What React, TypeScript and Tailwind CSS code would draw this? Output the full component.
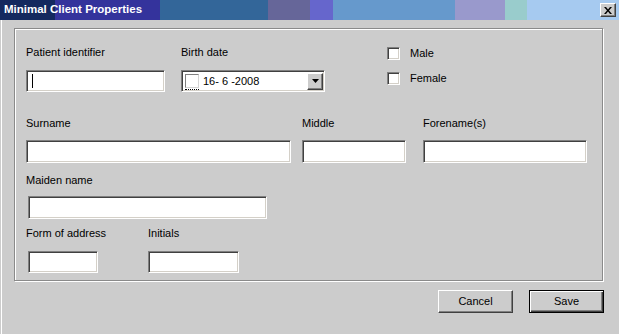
const sunken =
  "bg-white border border-t-[#808080] border-l-[#808080] border-r-white border-b-white shadow-[inset_1px_1px_0_#404040,inset_-1px_-1px_0_#d4d0c8]"

const raised =
  "bg-[#cccccc] border border-t-white border-l-white border-r-[#404040] border-b-[#404040] shadow-[inset_-1px_-1px_0_#808080]"

function Label({ children, className = "" }: { children: React.ReactNode; className?: string }) {
  return <div className={`h-[13px] leading-[13px] whitespace-nowrap ${className}`}>{children}</div>
}

function Check({ label, className = "" }: { label: string; className?: string }) {
  return (
    <div className={`flex items-center h-[13px] ${className}`}>
      <div className={`w-[13px] h-[13px] ${sunken}`} />
      <span className="ml-[10px] leading-[13px]">{label}</span>
    </div>
  )
}

export default function App() {
  return (
    <div
      className="w-[619px] h-[334px] bg-[#cccccc] flex flex-col overflow-hidden text-[11px] text-black"
      style={{ fontFamily: '"Liberation Sans", Arial, sans-serif' }}
    >
      {/* Title bar */}
      <div className="h-[20px] flex items-center bg-[linear-gradient(to_right,#14295f_0px,#14295f_55px,#34339c_55px,#34339c_160px,#336699_160px,#336699_268px,#666699_268px,#666699_310px,#6666cc_310px,#6666cc_333px,#6699cc_333px,#6699cc_455px,#9999cc_455px,#9999cc_505px,#99cccc_505px,#99cccc_527px,#a6caf0_527px)]">
        <span className="pl-[4px] font-bold text-white text-[11.5px]">Minimal Client Properties</span>
        <div className={`ml-auto mr-[3px] w-[16px] h-[14px] flex items-center justify-center ${raised}`}>
          <svg width="8" height="7" viewBox="0 0 8 7">
            <path d="M0 0h2l2 2.5L6 0h2L5 3.5 8 7H6L4 4.5 2 7H0l3-3.5z" fill="#000" />
          </svg>
        </div>
      </div>

      {/* Body */}
      <div className="flex-1 flex flex-col ml-[1px] border-l border-white">
        <div className="ml-[12px] mt-[8px] w-[589px] h-[253px] border border-[#8a8a8a] shadow-[inset_1px_1px_0_#fff,1px_1px_0_#fff]">
          {/* Row 1 */}
          <div className="flex pt-[17px]">
            <div className="ml-[11px] flex flex-col">
              <Label>Patient identifier</Label>
              <div className={`mt-[11px] w-[139px] h-[22px] flex items-center ${sunken}`}>
                <div className="ml-[5px] w-px h-[14px] bg-black" />
              </div>
            </div>
            <div className="ml-[16px] flex flex-col">
              <Label>Birth date</Label>
              <div className={`mt-[11px] w-[144px] h-[22px] flex items-center pl-[3px] pr-[1px] ${sunken}`}>
                <div className="relative w-[14px] h-[14px] border border-[#808080] border-r-[#d4d4d4] border-b-[#d4d4d4] bg-white">
                  <div className="absolute left-[-1px] right-[-1px] bottom-[-3px] border-b border-dotted border-black" />
                </div>
                <span className="ml-[4px] leading-[13px]">16- 6 -2008</span>
                <div className={`ml-auto w-[16px] h-[17px] flex items-center justify-center ${raised}`}>
                  <svg width="7" height="4" viewBox="0 0 7 4">
                    <path d="M0 0h7L3.5 4z" fill="#000" />
                  </svg>
                </div>
              </div>
            </div>
            <div className="ml-[62px] flex flex-col pt-[1px]">
              <Check label="Male" />
              <Check label="Female" className="mt-[12px]" />
            </div>
          </div>

          {/* Row 2 */}
          <div className="flex mt-[25px]">
            <div className="ml-[11px] flex flex-col">
              <Label>Surname</Label>
              <div className={`mt-[10px] w-[265px] h-[23px] ${sunken}`} />
            </div>
            <div className="ml-[11px] flex flex-col">
              <Label>Middle</Label>
              <div className={`mt-[10px] w-[104px] h-[23px] ${sunken}`} />
            </div>
            <div className="ml-[17px] flex flex-col">
              <Label>Forename(s)</Label>
              <div className={`mt-[10px] w-[164px] h-[23px] ${sunken}`} />
            </div>
          </div>

          {/* Row 3 */}
          <div className="flex flex-col mt-[11px] ml-[11px]">
            <Label>Maiden name</Label>
            <div className={`mt-[9px] ml-[2px] w-[239px] h-[23px] ${sunken}`} />
          </div>

          {/* Row 4 */}
          <div className="flex mt-[8px]">
            <div className="ml-[11px] w-[122px] flex flex-col">
              <Label>Form of address</Label>
              <div className={`mt-[11px] ml-[2px] w-[70px] h-[22px] ${sunken}`} />
            </div>
            <div className="flex flex-col">
              <Label>Initials</Label>
              <div className={`mt-[11px] w-[91px] h-[22px] ${sunken}`} />
            </div>
          </div>
        </div>

        {/* Buttons */}
        <div className="flex justify-end mt-[9px] mr-[15px] gap-[16px]">
          <button className={`w-[75px] h-[23px] text-[11px] ${raised}`}>Cancel</button>
          <button className="w-[75px] h-[23px] text-[11px] bg-[#cccccc] border border-black shadow-[inset_1px_1px_0_#fff,inset_-1px_-1px_0_#404040,inset_-2px_-2px_0_#808080]">
            Save
          </button>
        </div>
      </div>
    </div>
  )
}
